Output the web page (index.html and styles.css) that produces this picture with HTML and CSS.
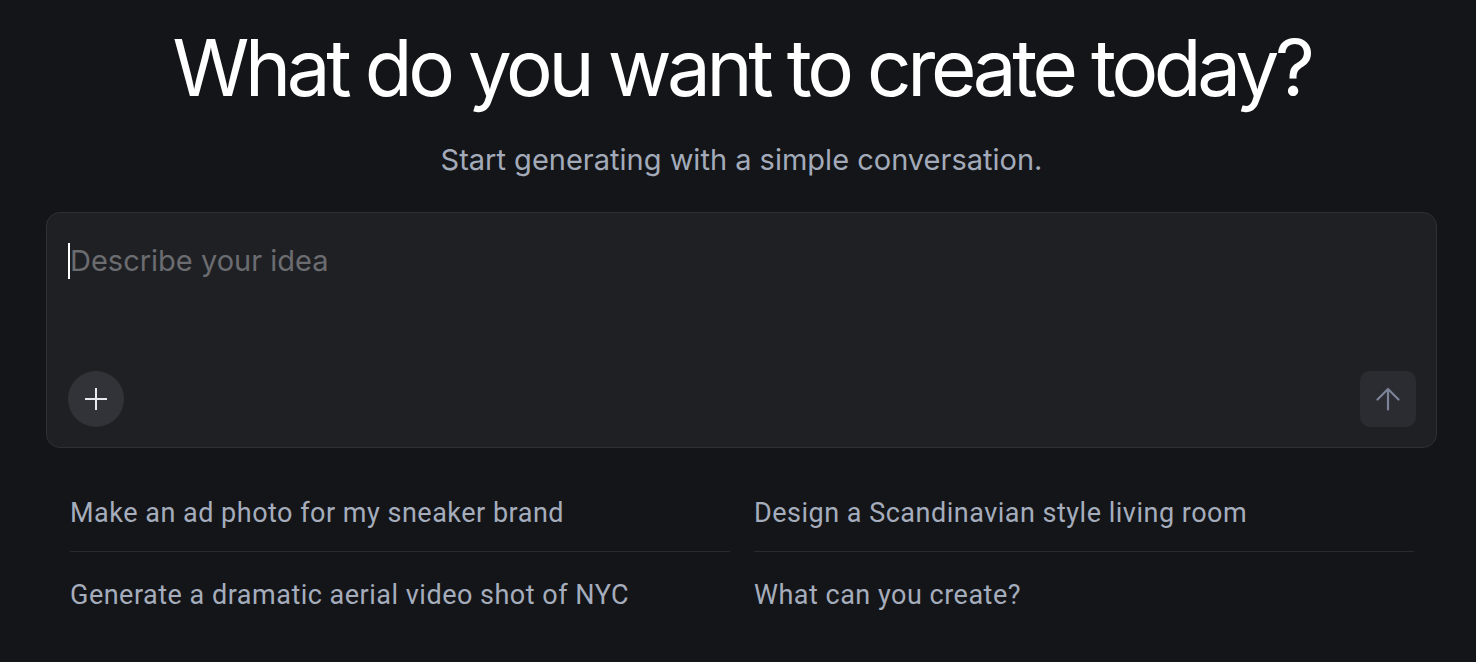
FILE: index.html
```html
<!DOCTYPE html>
<html lang="en">
<head>
    <meta charset="UTF-8">
    <meta name="viewport" content="width=device-width, initial-scale=1.0">
    <title>Create</title>
    <link rel="stylesheet" href="styles.css">
</head>
<body>
    <div class="container">
        <h1 class="title">What do you want to create today?</h1>
        <p class="subtitle">Start generating with a simple conversation.</p>

        <div class="prompt-box">
            <div class="prompt-input">
                <span class="caret"></span><span class="placeholder">Describe your idea</span>
            </div>
            <div class="prompt-actions">
                <button class="add-button" aria-label="Add">
                    <svg width="24" height="24" viewBox="0 0 24 24" fill="none" stroke="#e8eaee" stroke-width="2" stroke-linecap="square">
                        <path d="M12 2v20M2 12h20"/>
                    </svg>
                </button>
                <button class="send-button" aria-label="Send">
                    <svg width="24" height="24" viewBox="0 0 24 24" fill="none" stroke="#7c8297" stroke-width="2.2" stroke-linecap="round" stroke-linejoin="round">
                        <path d="M12 22.5V2M1.5 12.5L12 2l10.5 10.5"/>
                    </svg>
                </button>
            </div>
        </div>

        <div class="suggestions">
            <div class="suggestion first">Make an ad photo for my sneaker brand</div>
            <div class="suggestion first">Design a Scandinavian style living room</div>
            <div class="suggestion">Generate a dramatic aerial video shot of NYC</div>
            <div class="suggestion">What can you create?</div>
        </div>
    </div>
</body>
</html>
```

FILE: styles.css
```css
body {
    margin: 0;
    padding: 0;
    background: #141518;
    font-family: 'Inter', 'Noto Sans', sans-serif;
    color: white;
    overflow: hidden;
}

.container {
    margin: 0 39px 0 46px;
    padding-top: 21px;
}

.title {
    margin: 0;
    text-align: center;
    font-size: 78px;
    font-weight: 400;
    line-height: 1.2;
    letter-spacing: -4.4px;
    color: #ffffff;
}

.subtitle {
    margin: 28px 0 0;
    text-align: center;
    font-size: 29px;
    line-height: 34px;
    color: #a3abba;
}

.prompt-box {
    margin-top: 35px;
    height: 236px;
    background: #1f2024;
    border: 1px solid #2f3034;
    border-radius: 14px;
    display: flex;
    flex-direction: column;
    justify-content: space-between;
    padding: 30px 21px 20px 21px;
    box-sizing: border-box;
}

.prompt-input {
    display: flex;
    align-items: center;
    font-size: 29px;
    line-height: 36px;
    color: #6b6c70;
}

.caret {
    width: 2px;
    height: 36px;
    background: #ffffff;
}

.prompt-actions {
    display: flex;
    justify-content: space-between;
    align-items: center;
}

.add-button {
    width: 56px;
    height: 56px;
    border: none;
    border-radius: 50%;
    background: #323338;
    display: flex;
    align-items: center;
    justify-content: center;
    padding: 0;
    cursor: pointer;
}

.send-button {
    width: 56px;
    height: 56px;
    border: none;
    border-radius: 10px;
    background: #2b2c31;
    display: flex;
    align-items: center;
    justify-content: center;
    padding: 0;
    margin-right: -1px;
    cursor: pointer;
}

.suggestions {
    margin: 23px 23px 0 24px;
    display: grid;
    grid-template-columns: 1fr 1fr;
    column-gap: 24px;
}

.suggestion {
    font-family: 'Roboto', sans-serif;
    font-size: 27px;
    line-height: 32px;
    letter-spacing: 0.5px;
    color: #a5adbd;
    padding: 27px 0 24px;
}

.suggestion.first {
    border-bottom: 1px solid #2a2b2f;
    padding-top: 26px;
    padding-bottom: 22px;
}
```
